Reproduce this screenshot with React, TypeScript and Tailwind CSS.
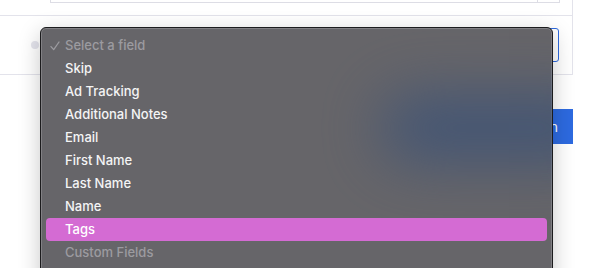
import React from 'react'

const items: { label: string; disabled?: boolean; checked?: boolean; active?: boolean }[] = [
  { label: 'Select a field', disabled: true, checked: true },
  { label: 'Skip' },
  { label: 'Ad Tracking' },
  { label: 'Additional Notes' },
  { label: 'Email' },
  { label: 'First Name' },
  { label: 'Last Name' },
  { label: 'Name' },
  { label: 'Tags', active: true },
  { label: 'Custom Fields', disabled: true },
]

function Check() {
  return (
    <svg width="10" height="10" viewBox="0 0 10 10" fill="none" className="shrink-0">
      <path d="M1 5.6 L3.7 8.6 L9 1" stroke="currentColor" strokeWidth="1.3" strokeLinecap="round" strokeLinejoin="round" />
    </svg>
  )
}

export default function App() {
  return (
    <div className="relative h-[268px] w-[600px] overflow-hidden bg-white font-['Inter',sans-serif]">
      {/* mapping card */}
      <div className="w-[573px] border-r border-[#e3e3eb]">
        <div className="h-[15px]">
          <div className="ml-[50px] flex h-[3px] w-[510px] justify-end border-x border-b border-[#dddde5]">
            <div className="w-[22px] border-l border-[#dddde5]" />
          </div>
        </div>
        <div className="flex h-[60px] items-center border-y border-[#e3e3eb]">
          <div className="ml-[31px] h-[8px] w-[8px] rounded-full bg-[#e4e4ec]" />
          <div className="ml-auto mr-[13px] h-[34px] w-[480px] rounded-[3px] border border-[#2f6be0]" />
        </div>
      </div>

      <div className="mt-[34px] flex w-[573px] justify-end">
        <button className="h-[35px] rounded-l-[3px] bg-[#2d6ae0] px-[15px] text-[14px] text-white">
          Save Configuration
        </button>
      </div>

      {/* native select popup */}
      <div className="absolute left-[40px] top-[27px] h-[262px] w-[513px] overflow-hidden rounded-[6px] border border-[#1c1c1e] bg-[#666569] shadow-[inset_0_0_0_1px_rgba(255,255,255,0.18),0_6px_22px_rgba(0,0,0,0.22)]">
        <div className="absolute left-[340px] top-[68px] h-[64px] w-[230px] rounded-full bg-[#3a5177] opacity-85 blur-[30px]" />
        <div className="relative flex flex-col px-[5px] pt-[6px]">
          {items.map((it) => (
            <div
              key={it.label}
              className={
                'flex h-[23px] items-center rounded-[4px] text-[13px] font-medium ' +
                (it.active ? 'bg-[#d46bd3] text-white' : it.disabled ? 'text-[#9c9ba0]' : 'text-[#f4f4f5]')
              }
            >
              <div className="flex w-[19px] justify-end pr-[5px]">{it.checked ? <Check /> : null}</div>
              <span>{it.label}</span>
            </div>
          ))}
        </div>
      </div>
    </div>
  )
}
